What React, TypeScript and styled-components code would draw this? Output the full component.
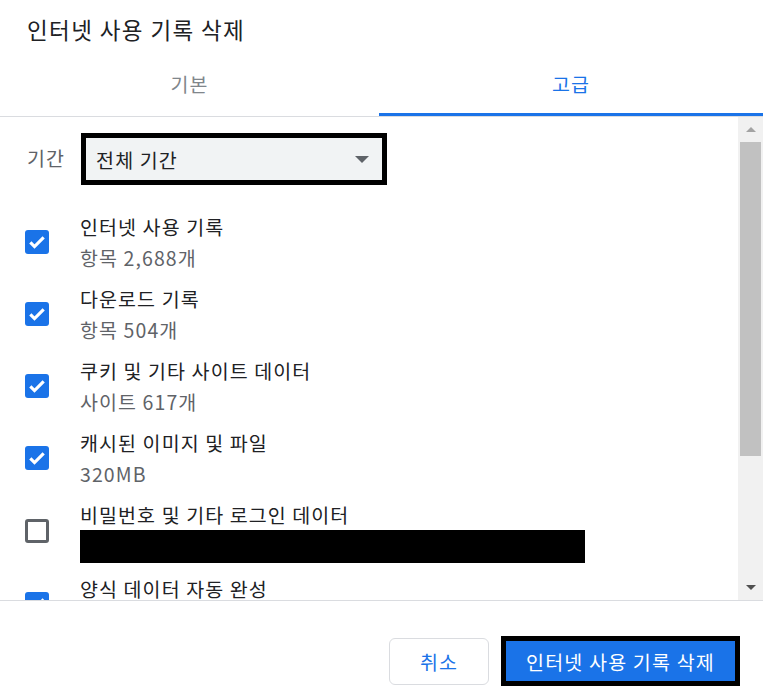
import React from 'react';
import styled, { createGlobalStyle } from 'styled-components';

// Global page reset
const GlobalStyle = createGlobalStyle`
    html, body {
        margin: 0;
        padding: 0;
        background: #ffffff;
    }
    body {
        font-family: 'Noto Sans CJK KR', 'Noto Sans', Roboto, sans-serif;
        color: #202124;
    }
`;

// Data
interface Item {
    label: string;
    detail?: string;
    checked: boolean;
    redacted?: boolean;
}

const items: Item[] = [
    { label: '인터넷 사용 기록', detail: '항목 2,688개', checked: true },
    { label: '다운로드 기록', detail: '항목 504개', checked: true },
    { label: '쿠키 및 기타 사이트 데이터', detail: '사이트 617개', checked: true },
    { label: '캐시된 이미지 및 파일', detail: '320MB', checked: true },
    { label: '비밀번호 및 기타 로그인 데이터', checked: false, redacted: true },
    { label: '양식 데이터 자동 완성', detail: '', checked: true },
];

// Style-Component setup
const Dialog = styled.div`
    width: 763px;
    height: 697px;
    display: flex;
    flex-direction: column;
    overflow: hidden;
    background: #fff;
`;

const Title = styled.h1`
    margin: 0;
    padding: 14px 27px 0;
    height: 44px;
    box-sizing: border-box;
    font-size: 22.5px;
    line-height: 30px;
    letter-spacing: 1.4px;
    font-weight: 400;
    color: #202124;
`;

const TabBar = styled.div`
    display: flex;
    border-bottom: 1px solid #dadce0;
`;

const Tab = styled.div<{ $active?: boolean }>`
    flex: ${props => (props.$active ? '1' : '0 0 379px')};
    height: 72px;
    box-sizing: border-box;
    padding-top: 10px;
    display: flex;
    align-items: center;
    justify-content: center;
    font-size: 19.5px;
    letter-spacing: 1px;
    color: ${props => (props.$active ? '#1a73e8' : '#80868b')};
    border-bottom: 3px solid ${props => (props.$active ? '#1a73e8' : 'transparent')};
`;

const Body = styled.div`
    flex: 1;
    display: flex;
    min-height: 0;
`;

const Content = styled.div`
    flex: 1;
    overflow: hidden;
    padding: 16px 0 0 25px;
    letter-spacing: 1.1px;
`;

const RangeRow = styled.div`
    display: flex;
    align-items: center;
    gap: 16px;
    padding-left: 2px;
`;

const RangeLabel = styled.span`
    font-size: 19.5px;
    color: #5f6368;
    margin-top: -3px;
`;

const Select = styled.div`
    width: 306px;
    height: 52px;
    box-sizing: border-box;
    border: 5px solid #000;
    background: #f1f3f4;
    display: flex;
    align-items: center;
    justify-content: space-between;
    padding: 0 13px 0 10px;
    font-size: 19.5px;
    color: #202124;
`;

const Caret = styled.span`
    width: 0;
    height: 0;
    border-left: 7px solid transparent;
    border-right: 7px solid transparent;
    border-top: 7px solid #5f6368;
`;

const List = styled.div`
    display: flex;
    flex-direction: column;
    gap: 10px;
    margin-top: 26px;
`;

const Row = styled.div`
    display: flex;
    align-items: center;
    gap: 31px;
`;

const Box = styled.span<{ $checked: boolean }>`
    width: 24px;
    height: 24px;
    flex: none;
    box-sizing: border-box;
    border-radius: 3px;
    display: flex;
    align-items: center;
    justify-content: center;
    background: ${props => (props.$checked ? '#1a73e8' : '#fff')};
    border: ${props => (props.$checked ? 'none' : '3px solid #5f6368')};
`;

const Texts = styled.div`
    display: flex;
    flex-direction: column;
`;

const Label = styled.span`
    font-size: 19.5px;
    line-height: 31px;
    color: #202124;
`;

const Detail = styled.span`
    font-size: 19.5px;
    line-height: 31px;
    min-height: 31px;
    color: #5f6368;
`;

const Redaction = styled.span`
    display: block;
    width: 505px;
    height: 33px;
    background: #000;
`;

const Scrollbar = styled.div`
    width: 25px;
    flex: none;
    display: flex;
    flex-direction: column;
    background: #f1f1f1;
`;

const ArrowButton = styled.div<{ $down?: boolean }>`
    height: 25px;
    display: flex;
    align-items: center;
    justify-content: center;
    &::after {
        content: '';
        width: 0;
        height: 0;
        border-left: 5px solid transparent;
        border-right: 5px solid transparent;
        ${props =>
            props.$down
                ? 'border-top: 5px solid #505050;'
                : 'border-bottom: 5px solid #a3a3a3;'}
    }
`;

const Track = styled.div`
    flex: 1;
    padding: 0 2px;
`;

const Thumb = styled.div`
    height: 314px;
    background: #c1c1c1;
`;

const Footer = styled.div`
    height: 97px;
    flex: none;
    box-sizing: border-box;
    border-top: 1px solid #dadce0;
    display: flex;
    align-items: center;
    justify-content: flex-end;
    gap: 12px;
    padding: 24px 23px 0 0;
`;

const CancelButton = styled.button`
    width: 100px;
    height: 47px;
    border: 1px solid #dadce0;
    border-radius: 6px;
    background: #fff;
    color: #1a73e8;
    font-family: inherit;
    font-size: 19.5px;
    letter-spacing: 1px;
    padding: 0;
`;

const DeleteButton = styled.button`
    width: 239px;
    height: 50px;
    border: 5px solid #000;
    background: #1a73e8;
    color: #fff;
    font-family: inherit;
    font-size: 19.5px;
    letter-spacing: 1.2px;
    padding: 0;
`;

const Check: React.FC = () => (
    <svg width="20" height="20" viewBox="0 0 24 24">
        <path d="M4 12.5l5 5 11-11" fill="none" stroke="#fff" strokeWidth="3.8" />
    </svg>
);

const App: React.FC = (): React.ReactElement => {
    return (
        <>
            <GlobalStyle />
            <Dialog>
                <Title>인터넷 사용 기록 삭제</Title>
                <TabBar>
                    <Tab>기본</Tab>
                    <Tab $active>고급</Tab>
                </TabBar>
                <Body>
                    <Content>
                        <RangeRow>
                            <RangeLabel>기간</RangeLabel>
                            <Select>
                                <span>전체 기간</span>
                                <Caret />
                            </Select>
                        </RangeRow>
                        <List>
                            {items.map(item => (
                                <Row key={item.label}>
                                    <Box $checked={item.checked}>{item.checked && <Check />}</Box>
                                    <Texts>
                                        <Label>{item.label}</Label>
                                        {item.redacted ? <Redaction /> : <Detail>{item.detail}</Detail>}
                                    </Texts>
                                </Row>
                            ))}
                        </List>
                    </Content>
                    <Scrollbar>
                        <ArrowButton />
                        <Track>
                            <Thumb />
                        </Track>
                        <ArrowButton $down />
                    </Scrollbar>
                </Body>
                <Footer>
                    <CancelButton>취소</CancelButton>
                    <DeleteButton>인터넷 사용 기록 삭제</DeleteButton>
                </Footer>
            </Dialog>
        </>
    );
};

export default App;
